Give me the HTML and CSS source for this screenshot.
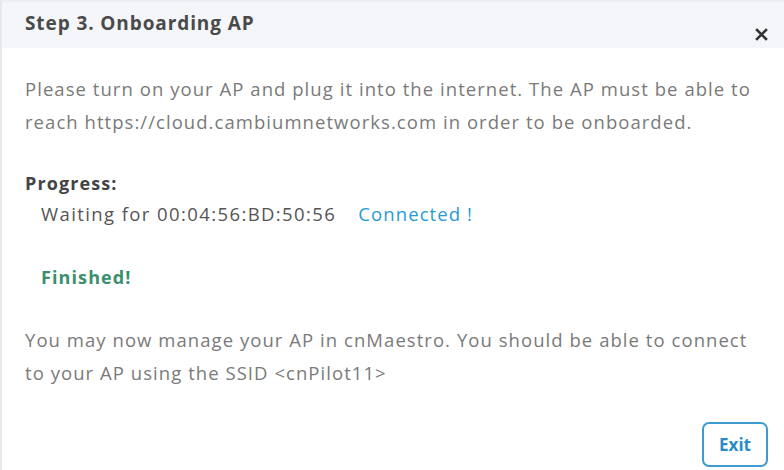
FILE: index.html
```html
<!DOCTYPE html>
<html lang="en">

<head>
    <meta charset="UTF-8">
    <meta name="viewport" content="width=device-width, initial-scale=1.0">
    <title>Step 3. Onboarding AP</title>
    <link rel="stylesheet" href="styles.css">
</head>

<body>
    <div id="dialog">
        <div class="header">
            <h3 class="title">Step 3. Onboarding AP</h3>
            <a href="javascript:;" class="close">
                <svg width="13" height="13" viewBox="0 0 13 13">
                    <path d="M2 2 L11 11 M11 2 L2 11" stroke="#333" stroke-width="2.6" stroke-linecap="square" />
                </svg>
            </a>
        </div>
        <div class="body">
            <p class="text">Please turn on your AP and plug it into the internet. The AP must be able to reach https://cloud.cambiumnetworks.com in order to be onboarded.</p>
            <div class="progress">
                <div class="label">Progress:</div>
                <div class="row">
                    <span class="mac">Waiting for 00:04:56:BD:50:56</span>
                    <span class="status">Connected !</span>
                </div>
                <div class="done">Finished!</div>
            </div>
            <p class="text">You may now manage your AP in cnMaestro. You should be able to connect to your AP using the SSID &lt;cnPilot11&gt;</p>
        </div>
        <div class="footer">
            <a href="javascript:;" class="btn">Exit</a>
        </div>
    </div>
</body>

</html>
```

FILE: styles.css
```css
* {
    margin: 0;
    padding: 0;
    box-sizing: border-box;
}

body {
    font-family: "Open Sans", Lato, sans-serif;
    background-color: #fff;
}

#dialog {
    width: 784px;
    height: 470px;
    border-left: 2px solid #e6e7ea;
    border-top: 2px solid #eceef1;
    display: flex;
    flex-direction: column;
}

.header {
    height: 46px;
    background-color: #f5f6fa;
    display: flex;
    justify-content: space-between;
    align-items: flex-start;
    padding: 0 16px 0 23px;
}

.title {
    font-size: 19px;
    font-weight: 700;
    letter-spacing: 0.9px;
    color: #4a4a4a;
    margin-top: 8px;
}

.close {
    display: block;
    margin-top: 26px;
    line-height: 0;
}

.body {
    padding: 24px 16px 0 23px;
    flex: 1;
}

.text {
    font-size: 18.5px;
    letter-spacing: 1.05px;
    line-height: 33px;
    color: #7a7a7a;
}

.progress {
    margin-top: 33px;
    margin-bottom: 34px;
}

.label {
    font-size: 18px;
    letter-spacing: 1.1px;
    font-weight: 700;
    color: #444;
    line-height: 24px;
}

.row {
    padding-left: 16px;
    margin-top: 6px;
    font-size: 18.5px;
    letter-spacing: 1.4px;
    line-height: 26px;
    display: flex;
    gap: 22px;
}

.mac {
    color: #555;
}

.status {
    color: #2a9ad4;
    letter-spacing: 1.1px;
}

.done {
    padding-left: 16px;
    margin-top: 38px;
    font-size: 18px;
    letter-spacing: 1.1px;
    line-height: 24px;
    font-weight: 700;
    color: #3a8f6c;
}

.footer {
    display: flex;
    justify-content: flex-end;
    padding: 0 16px 3px 0;
}

.btn {
    display: block;
    width: 66px;
    height: 45px;
    border: 2px solid #3d9bd1;
    border-radius: 7px;
    color: #2a8bc9;
    font-size: 17px;
    font-weight: 700;
    text-decoration: none;
    text-align: center;
    line-height: 41px;
}
```
